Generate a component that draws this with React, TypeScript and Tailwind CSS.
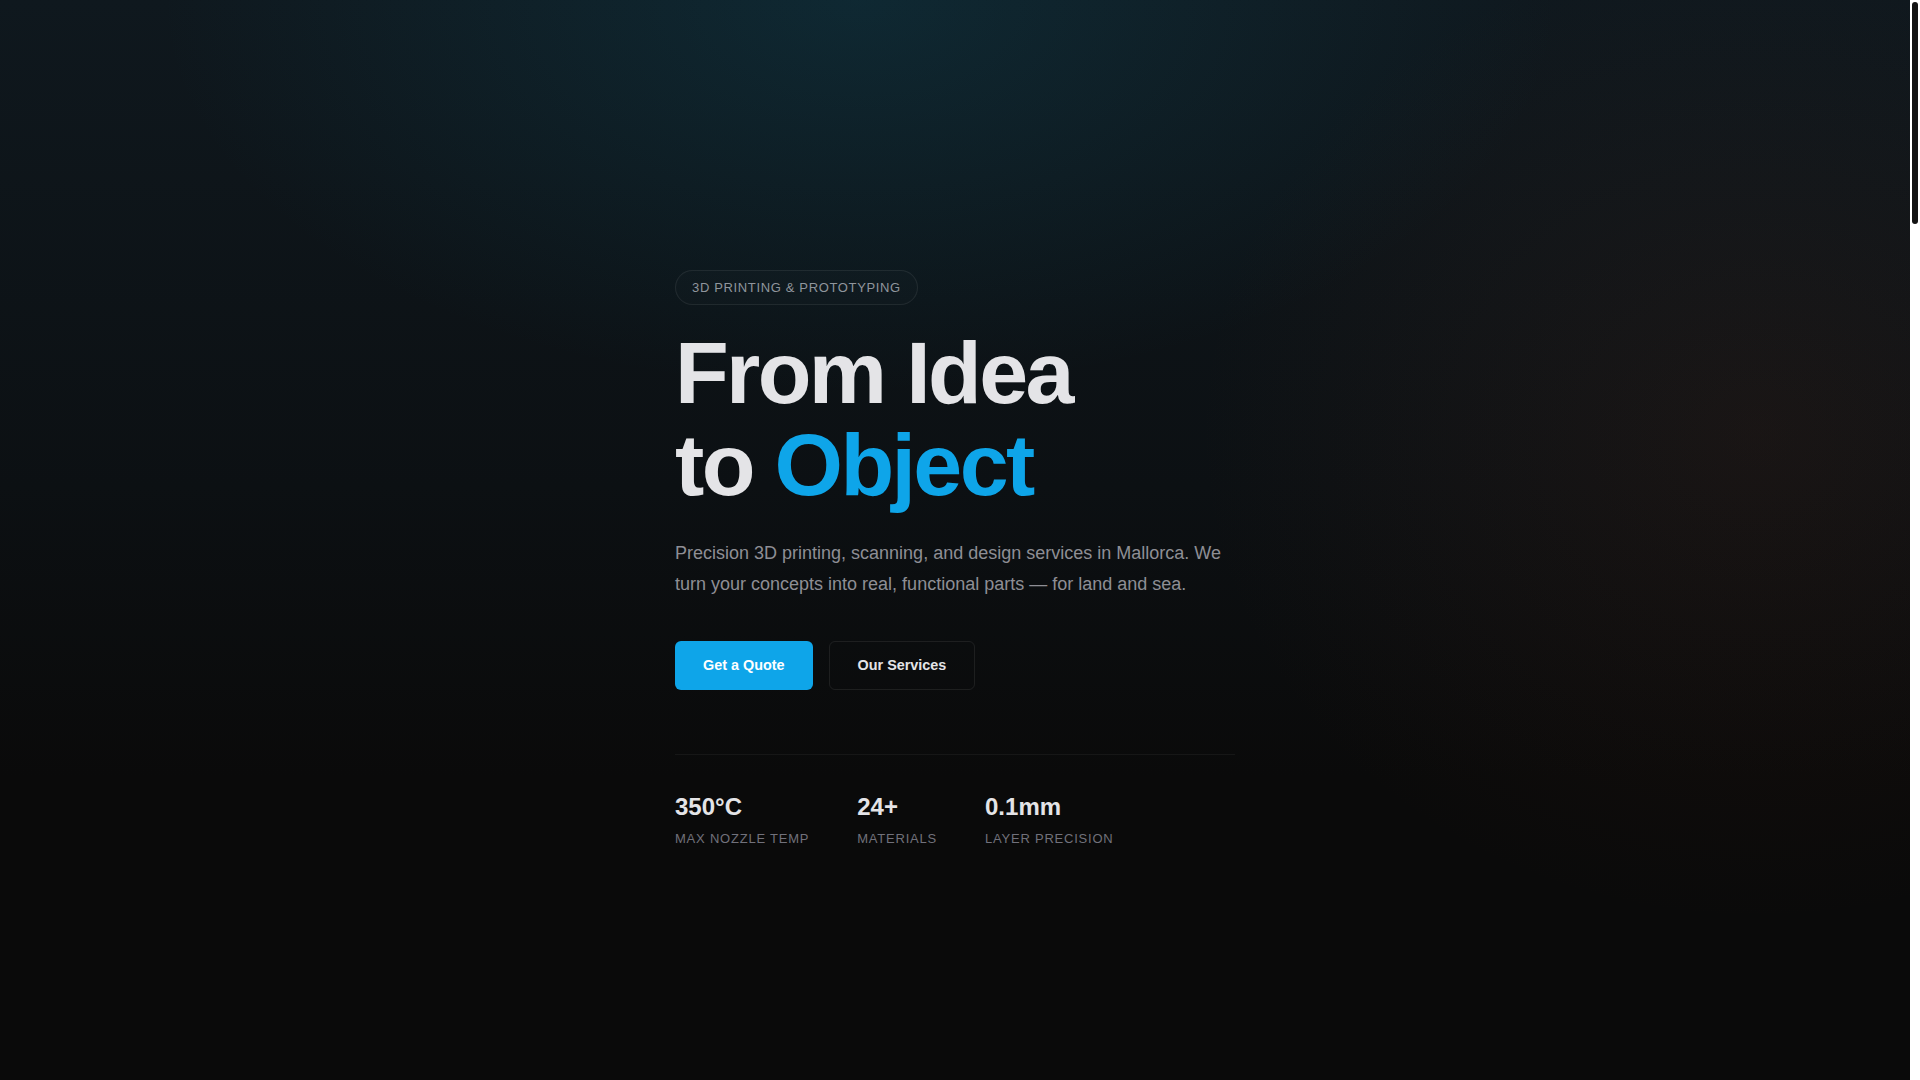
import React from 'react';

const stats = [
  { value: '350°C', label: 'Max Nozzle Temp' },
  { value: '24+', label: 'Materials' },
  { value: '0.1mm', label: 'Layer Precision' },
];

const Hero: React.FC = () => {
  return (
    <section className="h-[1080px] bg-[#0a0a0a] bg-[radial-gradient(ellipse_1000px_560px_at_45%_0%,rgba(14,116,144,0.18),transparent_70%),radial-gradient(ellipse_800px_700px_at_92%_40%,rgba(120,53,25,0.12),transparent_70%),linear-gradient(180deg,#0f181e_0%,#0c1013_45%,#0a0a0a_72%)]">
      <div className="mx-auto w-[560px] pt-[270px]">
        <span className="inline-block rounded-full border border-white/[0.07] bg-white/[0.01] px-4 py-2 text-[13px] leading-[17px] tracking-[0.05em] text-[#8f959c] uppercase">
          3D Printing &amp; Prototyping
        </span>

        <h1 className="mt-[22px] text-[88px] font-bold leading-[1.05] tracking-[-0.03em] text-zinc-200">
          From Idea
          <br />
          to <span className="text-[#0ea5e9]">Object</span>
        </h1>

        <p className="mt-[26px] text-lg leading-[1.75] text-[#8e8e95]">
          Precision 3D printing, scanning, and design services in Mallorca. We turn your concepts into real, functional
          parts — for land and sea.
        </p>

        <div className="mt-10 flex gap-4">
          <button className="rounded-md bg-[#0ea5e9] px-7 py-[15px] text-[0.9rem] font-bold leading-[19px] text-white">
            Get a Quote
          </button>
          <button className="rounded-md border border-white/[0.08] bg-transparent px-7 py-3.5 text-[0.9rem] font-bold leading-[19px] text-zinc-200">
            Our Services
          </button>
        </div>

        <div className="mt-16 flex gap-12 border-t border-white/[0.05] pt-9">
          {stats.map((s) => (
            <div key={s.label}>
              <div className="text-2xl font-bold leading-8 text-zinc-200">{s.value}</div>
              <div className="mt-2 text-[13px] leading-4 tracking-[0.06em] text-zinc-500 uppercase">{s.label}</div>
            </div>
          ))}
        </div>
      </div>
    </section>
  );
};

export default function App() {
  return (
    <div className="flex h-screen overflow-hidden bg-[#0a0a0a] font-['Liberation_Sans',Arial,sans-serif]">
      <main className="min-w-0 flex-1">
        <Hero />
      </main>
      {/* page scrollbar */}
      <aside className="w-2.5 shrink-0 bg-white p-0.5">
        <div className="h-[222px] rounded-full bg-[#121212]" />
      </aside>
    </div>
  );
}
